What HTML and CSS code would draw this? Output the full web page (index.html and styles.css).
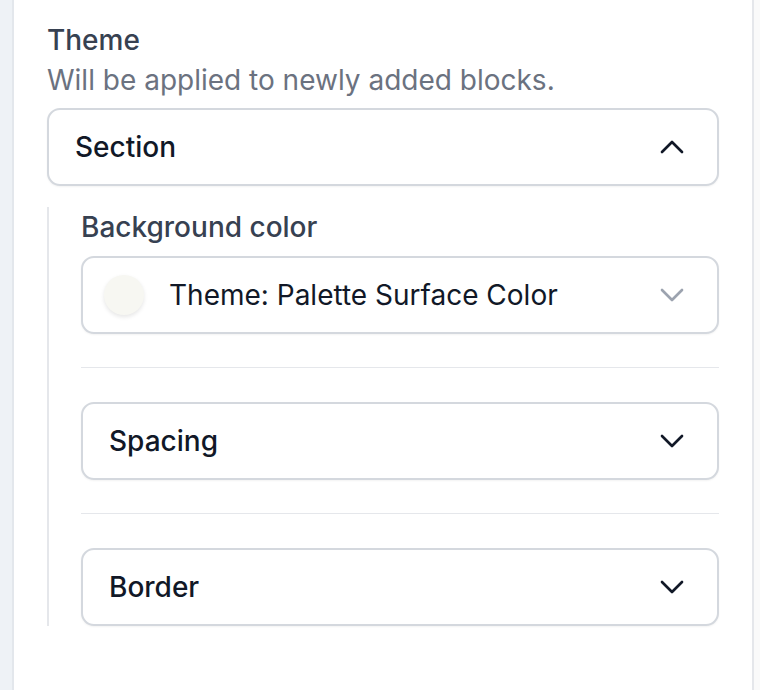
FILE: index.html
```html
<!DOCTYPE html>
<html lang="en">
<head>
    <meta charset="UTF-8">
    <meta name="viewport" content="width=device-width, initial-scale=1.0">
    <title>Theme settings</title>
    <link rel="stylesheet" href="styles.css">
</head>
<body>
    <div class="side-strip"></div>

    <div class="panel">
        <div class="field-label">Theme</div>
        <div class="field-hint">Will be applied to newly added blocks.</div>

        <div class="box">
            <span class="box-title">Section</span>
            <svg class="chevron" viewBox="0 0 24 24" fill="none" stroke="currentColor" stroke-width="2"><path d="M4.5 15.75l7.5-7.5 7.5 7.5" stroke-linecap="round" stroke-linejoin="round"/></svg>
        </div>

        <div class="nested">
            <div class="field-label">Background color</div>
            <div class="box select">
                <span class="swatch"></span>
                <span class="select-text">Theme: Palette Surface Color</span>
                <svg class="chevron muted" viewBox="0 0 24 24" fill="none" stroke="currentColor" stroke-width="2"><path d="M19.5 8.25l-7.5 7.5-7.5-7.5" stroke-linecap="round" stroke-linejoin="round"/></svg>
            </div>

            <div class="divider"></div>

            <div class="box">
                <span class="box-title">Spacing</span>
                <svg class="chevron" viewBox="0 0 24 24" fill="none" stroke="currentColor" stroke-width="2"><path d="M19.5 8.25l-7.5 7.5-7.5-7.5" stroke-linecap="round" stroke-linejoin="round"/></svg>
            </div>

            <div class="divider"></div>

            <div class="box">
                <span class="box-title">Border</span>
                <svg class="chevron" viewBox="0 0 24 24" fill="none" stroke="currentColor" stroke-width="2"><path d="M19.5 8.25l-7.5 7.5-7.5-7.5" stroke-linecap="round" stroke-linejoin="round"/></svg>
            </div>
        </div>
    </div>

    <div class="side-strip right"></div>
</body>
</html>
```

FILE: styles.css
```css
* {
    box-sizing: border-box;
}

body {
    margin: 0;
    height: 100vh;
    display: flex;
    font-family: Inter, "Noto Sans", sans-serif;
    font-size: 28px;
    line-height: 40px;
    background: #ffffff;
}

.side-strip {
    width: 12px;
    background: #eef2f6;
}
.side-strip.right {
    width: 6px;
    background: #fafafa;
}

.panel {
    flex: 1;
    background: #ffffff;
    border-left: 2px solid #e3e7ec;
    border-right: 2px solid #e5e7eb;
    padding: 20px 33px 0 33px;
}

.field-label {
    font-weight: 500;
    color: #374151;
}

.field-hint {
    color: #6b7280;
    margin-bottom: 8px;
}

.box {
    height: 78px;
    display: flex;
    align-items: center;
    border: 2px solid #d4d8de;
    border-radius: 13px;
    background: #ffffff;
    box-shadow: 0 1px 2px rgba(0, 0, 0, 0.05);
    padding: 0 29px 0 26px;
}

.box-title {
    flex: 1;
    font-weight: 500;
    color: #111827;
}

.chevron {
    width: 32px;
    height: 32px;
    color: #111827;
}
.chevron.muted {
    color: #9ca3af;
}

.nested {
    margin-top: 21px;
    border-left: 2px solid #e5e7eb;
    padding-left: 32px;
}

.nested .field-label {
    margin-bottom: 9px;
}

.select {
    padding-left: 21px;
}

.swatch {
    width: 40px;
    height: 40px;
    border-radius: 50%;
    background: #f7f7f2;
    box-shadow: 0 2px 4px rgba(0, 0, 0, 0.1);
    margin-right: 25px;
}

.select-text {
    flex: 1;
    color: #111827;
}

.divider {
    height: 1px;
    background: #e5e7eb;
    margin: 33px 0 34px;
}
```
